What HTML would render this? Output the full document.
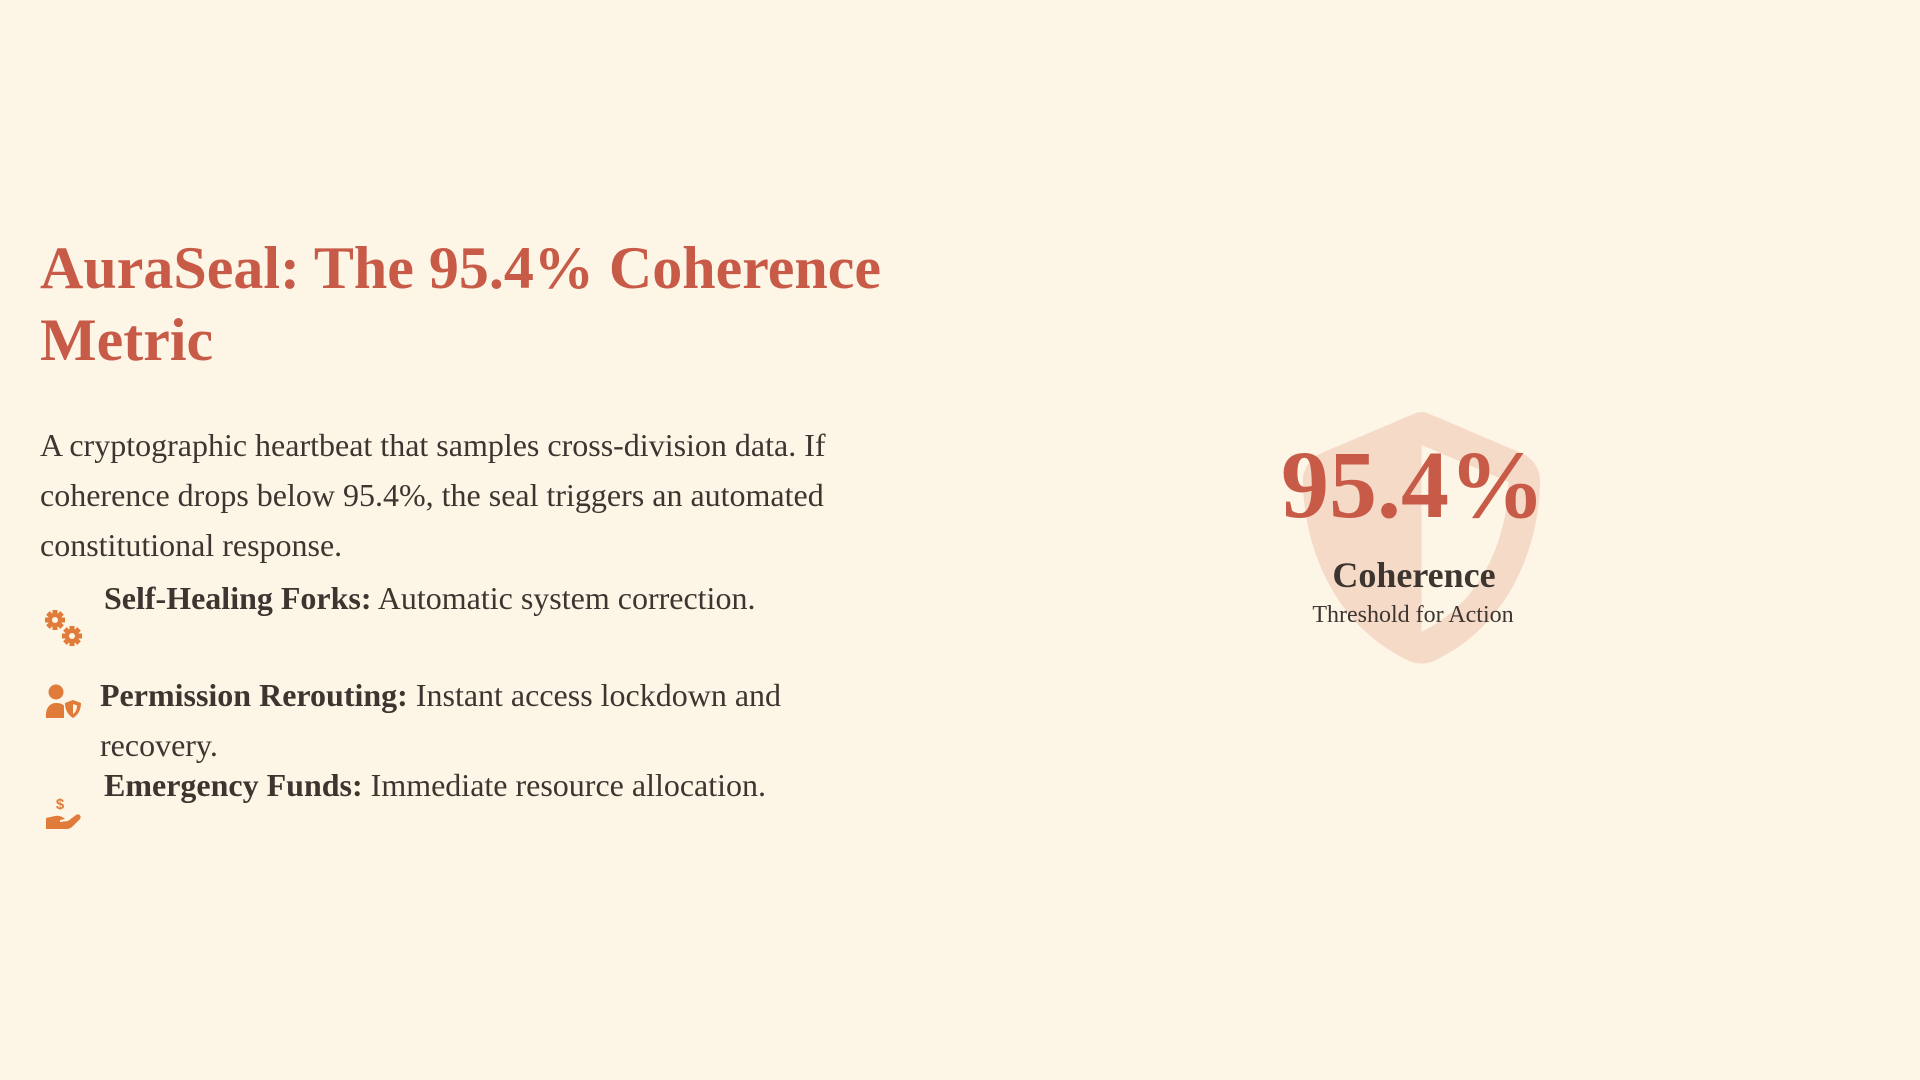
<!DOCTYPE html>
<html><head><meta charset="utf-8"><style>
html,body{margin:0;padding:0}
body{width:1920px;height:1080px;background:#fdf6e6;position:relative;overflow:hidden;font-family:"Liberation Serif","Times New Roman",serif;color:#3d3530}
.a{position:absolute;white-space:nowrap}
h1{position:absolute;left:40px;top:232px;margin:0;font-size:60px;line-height:72px;font-weight:bold;color:#c85a48;width:900px}
.p{position:absolute;left:40px;top:420px;width:850px;font-size:32px;line-height:50px}
.li{font-size:32px;line-height:50px}
b{font-weight:bold}
</style></head><body>
<h1>AuraSeal: The 95.4% Coherence<br>Metric</h1>
<div class="p">A cryptographic heartbeat that samples cross-division data. If<br>coherence drops below 95.4%, the seal triggers an automated<br>constitutional response.</div>

<svg class="a" style="left:44px;top:609px" width="40" height="40" viewBox="0 0 40 40" fill="#e07b39">
<g transform="translate(11,11)"><circle r="7"/><g><rect x="-2.5" y="-10" width="5" height="20"/><rect x="-10" y="-2.5" width="20" height="5"/><rect x="-2.5" y="-10" width="5" height="20" transform="rotate(45)"/><rect x="-2.5" y="-10" width="5" height="20" transform="rotate(-45)"/></g><circle r="3" fill="#fdf6e6"/></g>
<g transform="translate(28,27)"><circle r="7"/><rect x="-2.5" y="-10" width="5" height="20"/><rect x="-10" y="-2.5" width="20" height="5"/><rect x="-2.5" y="-10" width="5" height="20" transform="rotate(45)"/><rect x="-2.5" y="-10" width="5" height="20" transform="rotate(-45)"/><circle r="3" fill="#fdf6e6"/></g>
</svg>
<div class="a li" style="left:104px;top:573px"><b>Self-Healing Forks:</b> Automatic system correction.</div>

<svg class="a" style="left:44px;top:684px" width="38" height="34" viewBox="0 0 38 34" fill="#e07b39">
<circle cx="12" cy="8" r="7.5"/>
<path d="M2 34 C1 24 6 19 12 19 C16 19 19 20 20 22 L20 34Z"/>
<path d="M29 16 L37 19 C37 26 34 31 29 34 C24 31 21 26 21 19Z"/>
<path d="M29 20 L33 21.5 C33 26 31 29 29 30Z" fill="#fdf6e6"/>
</svg>
<div class="a li" style="left:100px;top:670px"><b>Permission Rerouting:</b> Instant access lockdown and</div>
<div class="a li" style="left:100px;top:720px">recovery.</div>

<svg class="a" style="left:45px;top:796px" width="38" height="34" viewBox="0 0 38 34" fill="#e07b39">
<text x="15" y="13" font-family="Liberation Sans,sans-serif" font-weight="bold" font-size="15" fill="#e07b39" text-anchor="middle">$</text>
<path d="M1 22 L10 20 C14 19 18 21 20 23 L15 24 L15 26 L23 25 L31 19 C34 17 37 20 35 23 L28 30 C26 32 24 33 21 33 L1 33Z"/>
</svg>
<div class="a li" style="left:104px;top:760px"><b>Emergency Funds:</b> Immediate resource allocation.</div>

<svg class="a" style="left:1295px;top:412px" width="253" height="253" viewBox="0 0 512 512">
<path fill="#f6dac8" d="M256 0c4.6 0 9.2 1 13.4 2.9L457.7 82.8c22 9.3 38.4 31 38.3 57.2c-.5 99.2-41.3 280.7-213.6 363.2c-16.7 8-36.1 8-52.8 0C57.3 420.7 16.5 239.2 16 140c-.1-26.2 16.3-47.9 38.3-57.2L242.7 2.9C246.8 1 251.4 0 256 0zm0 66.8V444.8C394 378 431.1 230.1 432 141.4L256 66.8z"/>
</svg>
<div class="a" style="left:1213px;width:400px;text-align:center;top:430px;font-size:96px;line-height:110px;font-weight:bold;color:#c85a48">95.4%</div>
<div class="a" style="left:1214px;width:400px;text-align:center;top:553px;font-size:36px;line-height:44px;font-weight:bold;color:#3d3530">Coherence</div>
<div class="a" style="left:1213px;width:400px;text-align:center;top:600px;font-size:24px;line-height:30px;color:#3d3530">Threshold for Action</div>
</body></html>
